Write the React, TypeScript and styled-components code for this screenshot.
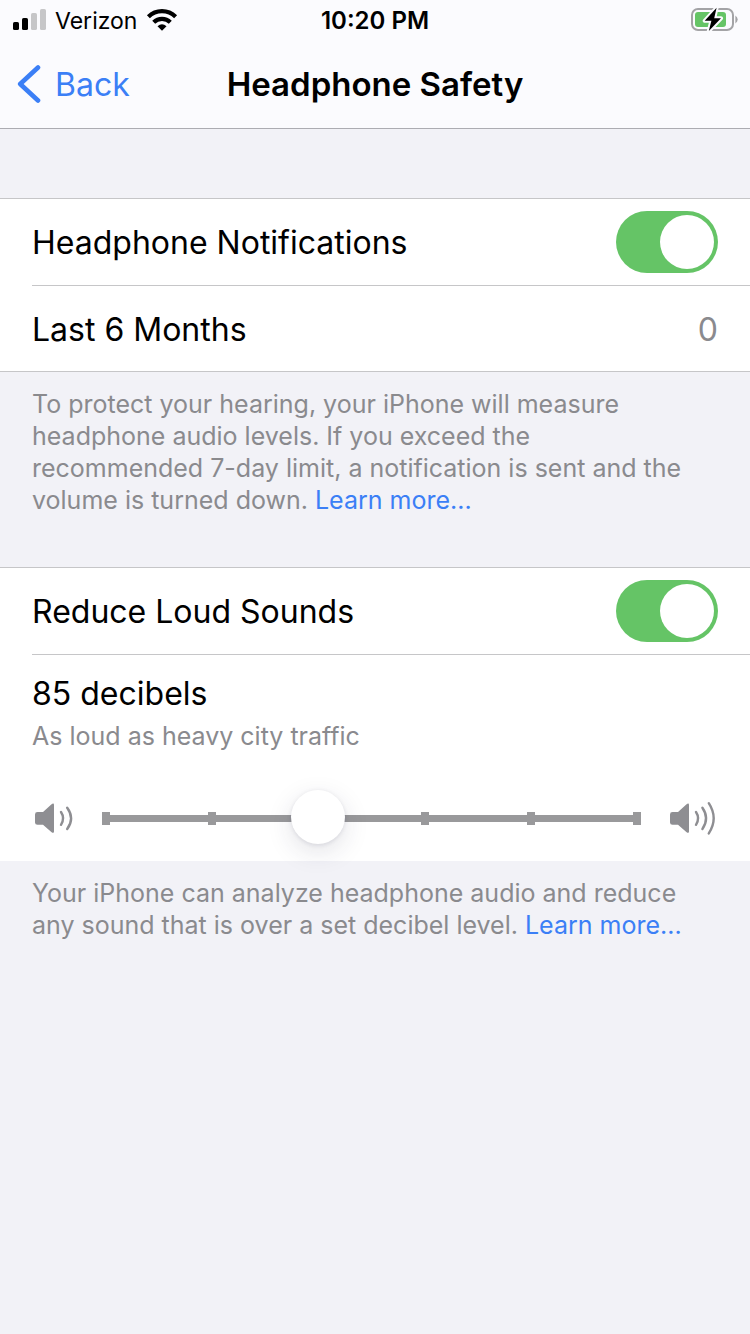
import React, { useState } from "react";
import styled, { createGlobalStyle } from "styled-components";

const GlobalStyle = createGlobalStyle`
  * { box-sizing: border-box; }
  body {
    margin: 0;
    background: #f2f2f7;
    color: #000;
    font-family: Inter, "Liberation Sans", sans-serif;
  }
`;

const Header = styled.header`
  background: #fbfbfe;
  border-bottom: 1px solid #acacb2;
`;

const Bar = styled.div<{ $height: number; $inset: number }>`
  display: grid;
  grid-template-columns: 1fr auto 1fr;
  align-items: center;
  height: ${(p) => p.$height}px;
  padding: 0 ${(p) => p.$inset}px;
`;

const Carrier = styled.div`
  display: flex;
  align-items: center;
  gap: 9px;
`;

const StatusText = styled.span<{ $strong?: boolean }>`
  padding-top: 2px;
  font-size: ${(p) => (p.$strong ? 24 : 23)}px;
  line-height: 32px;
  font-weight: ${(p) => (p.$strong ? 600 : 400)};
`;

const BatterySlot = styled.div`
  display: flex;
  justify-content: flex-end;
`;

const BackLink = styled.a`
  display: flex;
  align-items: center;
  gap: 14px;
  color: #3b7ff6;
  font-size: 32px;
  line-height: 40px;
  text-decoration: none;

  & > span {
    padding-top: 2px;
  }
`;

const Title = styled.h1`
  margin: 0;
  font-size: 33px;
  line-height: 40px;
  font-weight: 600;
`;

const Main = styled.main`
  display: flex;
  flex-direction: column;
  gap: 51px;
  padding: 69px 0 51px;
`;

const Card = styled.div<{ $open?: boolean }>`
  background: #fff;
  border-top: 1px solid #c6c6c8;
  border-bottom: ${(p) => (p.$open ? "none" : "1px solid #c6c6c8")};
`;

const Row = styled.div<{ $divider?: boolean }>`
  display: flex;
  align-items: center;
  justify-content: space-between;
  min-height: 85px;
  margin-left: 32px;
  padding: 12px 32px 12px 0;
  border-bottom: ${(p) => (p.$divider ? "1px solid #c6c6c8" : "none")};
  font-size: 32px;
  line-height: 40px;

  & > label,
  & > span {
    padding-top: 2px;
  }
`;

const Value = styled.span`
  color: #8a8a8e;
`;

const Switch = styled.input`
  appearance: none;
  display: flex;
  flex: none;
  width: 102px;
  height: 62px;
  margin: 0;
  padding: 4px;
  border-radius: 31px;
  background: #e9e9ea;

  &::before {
    content: "";
    width: 54px;
    height: 54px;
    border-radius: 50%;
    background: #fff;
  }
  &:checked {
    justify-content: flex-end;
    background: #65c466;
  }
`;

const Note = styled.p`
  margin: 0;
  padding: 16px 48px 0 32px;
  color: #8a8a8e;
  font-size: 25px;
  line-height: 32px;
`;

const NoteLink = styled.a`
  color: #3b7ff6;
  text-decoration: none;
`;

const LevelPanel = styled.div`
  padding: 19px 32px 15px;
`;

const LevelTitle = styled.label`
  display: block;
  font-size: 32px;
  line-height: 40px;
`;

const LevelHint = styled.div`
  margin-top: 6px;
  color: #8a8a8e;
  font-size: 25px;
  line-height: 32px;
`;

const SliderRow = styled.div`
  display: flex;
  align-items: center;
  gap: 29px;
  height: 56px;
  margin-top: 38px;
`;

const Track = styled.div`
  position: relative;
  display: flex;
  flex: 1;
  align-items: center;
  justify-content: space-between;
  height: 54px;
  background: linear-gradient(#99999b, #99999b) center / 100% 7px no-repeat;
`;

const Tick = styled.span`
  width: 8px;
  height: 13px;
  background: #99999b;
`;

const Range = styled.input`
  position: absolute;
  top: -1px;
  left: -23px;
  width: calc(100% + 46px);
  height: 54px;
  margin: 0;
  appearance: none;
  background: transparent;

  &::-webkit-slider-thumb {
    appearance: none;
    width: 54px;
    height: 54px;
    border: none;
    border-radius: 50%;
    background: #fff;
    box-shadow: 0 1px 4px rgba(40, 40, 70, 0.12), 0 8px 26px rgba(40, 40, 70, 0.13);
  }
`;

const SignalIcon = () => (
  <svg width="34" height="22" viewBox="-1 0 34 22" aria-hidden="true">
    <rect x="0" y="13" width="6" height="8" rx="1.6" />
    <rect x="9" y="9" width="6" height="12" rx="1.6" />
    <rect x="18" y="4" width="6" height="17" rx="1.6" fill="#c6c6c8" />
    <rect x="27" y="0" width="6" height="21" rx="1.6" fill="#c6c6c8" />
  </svg>
);

const WifiIcon = () => (
  <svg width="32" height="22" viewBox="-1 0 32 22" aria-hidden="true">
    <g fill="none" stroke="#000" strokeWidth="4.2">
      <path d="M1.4 7.7A19.4 19.4 0 0 1 28.6 7.7" />
      <path d="M6.7 13.2A11.8 11.8 0 0 1 23.3 13.2" />
    </g>
    <path d="M15 21.8L10.5 17.3Q15 13.4 19.5 17.3Z" />
  </svg>
);

const BatteryIcon = () => (
  <svg width="48" height="26" viewBox="0 0 48 26" role="img" aria-label="Charging">
    <rect x="2" y="2" width="41" height="21" rx="6" fill="none" stroke="#a3a3a6" strokeWidth="2" />
    <path d="M45.4 8.6Q50 12.5 45.4 16.4Z" fill="#a3a3a6" />
    <rect x="5" y="5" width="31" height="15" rx="3" fill="#65c466" />
    <path
      d="M26.6 0.8L14.7 13.8H21.4L18.8 24L31 11.3H24.2Z"
      fill="#000"
      stroke="#fbfbfe"
      strokeWidth="4"
      strokeLinejoin="round"
      paintOrder="stroke"
    />
  </svg>
);

const BackIcon = () => (
  <svg width="24" height="38" viewBox="0 0 24 38" aria-hidden="true">
    <path d="M21 2.5L3.2 19L21 35.5" fill="none" stroke="#3b7ff6" strokeWidth="4.6" strokeLinecap="round" strokeLinejoin="round" />
  </svg>
);

const speaker = "M5.5 11H11L19.3 3.4Q22 1.4 22 4V30.4Q22 33 19.3 31L11 23.8H5.5Q3 23.8 3 21.4V13.4Q3 11 5.5 11Z";

const QuietIcon = () => (
  <svg width="41" height="34" viewBox="0 0 41 34" aria-hidden="true">
    <path d={speaker} fill="#8e8e92" />
    <g fill="none" stroke="#8e8e92" strokeWidth="2.4" strokeLinecap="round">
      <path d="M29 11Q33.2 17.4 29 23.8" />
      <path d="M35.2 6.8Q43 17.4 35.2 28" />
    </g>
  </svg>
);

const LoudIcon = () => (
  <svg width="48" height="34" viewBox="0 0 48 34" aria-hidden="true">
    <path d={speaker} transform="translate(-3 0)" fill="#8e8e92" />
    <g fill="none" stroke="#8e8e92" strokeWidth="2.4" strokeLinecap="round">
      <path d="M26 11Q30.2 17.4 26 23.8" />
      <path d="M32.4 6.8Q39.8 17.4 32.4 28" />
      <path d="M38.8 2.2Q48.6 17.4 38.8 32.4" />
    </g>
  </svg>
);

export default function App() {
  const [notify, setNotify] = useState(true);
  const [reduce, setReduce] = useState(true);
  const [level, setLevel] = useState(2);

  return (
    <>
      <GlobalStyle />
      <Header>
        <Bar $height={40} $inset={12}>
          <Carrier>
            <SignalIcon />
            <StatusText>Verizon</StatusText>
            <WifiIcon />
          </Carrier>
          <StatusText as="time" $strong>
            10:20 PM
          </StatusText>
          <BatterySlot>
            <BatteryIcon />
          </BatterySlot>
        </Bar>
        <Bar $height={88} $inset={17}>
          <BackLink href="#back">
            <BackIcon />
            <span>Back</span>
          </BackLink>
          <Title>Headphone Safety</Title>
        </Bar>
      </Header>
      <Main>
        <section>
          <Card>
            <Row $divider>
              <label htmlFor="notify">Headphone Notifications</label>
              <Switch id="notify" type="checkbox" role="switch" checked={notify} onChange={(e) => setNotify(e.target.checked)} />
            </Row>
            <Row>
              <span>Last 6 Months</span>
              <Value>0</Value>
            </Row>
          </Card>
          <Note>
            To protect your hearing, your iPhone will measure headphone audio levels. If you exceed the recommended
            7-day limit, a notification is sent and the volume is turned down.{" "}
            <NoteLink href="#notifications">Learn more...</NoteLink>
          </Note>
        </section>
        <section>
          <Card $open>
            <Row $divider>
              <label htmlFor="reduce">Reduce Loud Sounds</label>
              <Switch id="reduce" type="checkbox" role="switch" checked={reduce} onChange={(e) => setReduce(e.target.checked)} />
            </Row>
            <LevelPanel>
              <LevelTitle htmlFor="level">85 decibels</LevelTitle>
              <LevelHint>As loud as heavy city traffic</LevelHint>
              <SliderRow>
                <QuietIcon />
                <Track>
                  {[0, 1, 2, 3, 4, 5].map((n) => (
                    <Tick key={n} />
                  ))}
                  <Range id="level" type="range" min={0} max={5} value={level} onChange={(e) => setLevel(Number(e.target.value))} />
                </Track>
                <LoudIcon />
              </SliderRow>
            </LevelPanel>
          </Card>
          <Note>
            Your iPhone can analyze headphone audio and reduce any sound that is over a set decibel level.{" "}
            <NoteLink href="#reduce">Learn more...</NoteLink>
          </Note>
        </section>
      </Main>
    </>
  );
}
